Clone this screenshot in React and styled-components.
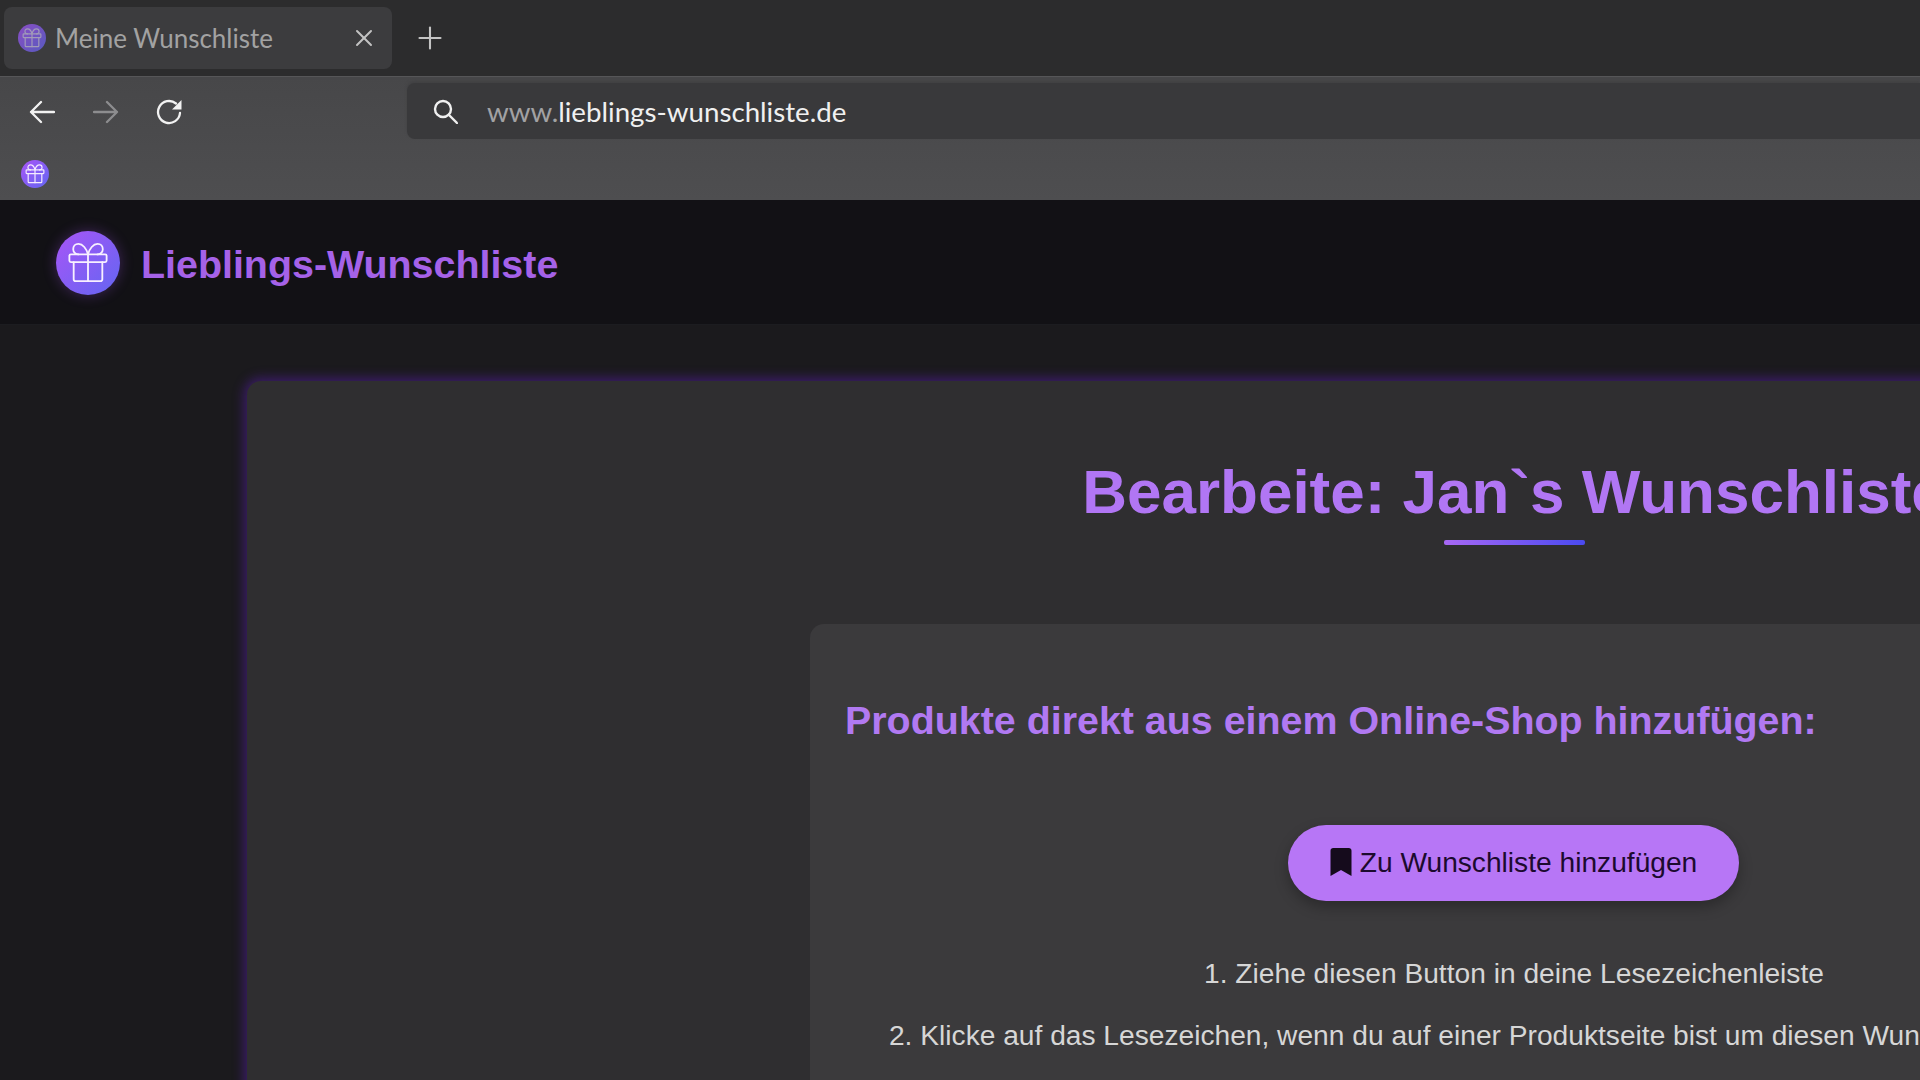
import React from "react";
import styled, { createGlobalStyle } from "styled-components";
import { Plus, X } from "lucide-react";
import { FaBookmark } from "react-icons/fa";

const Global = createGlobalStyle`
  html, body { margin: 0; padding: 0; height: 1080px; overflow: hidden; background: #1b1a1d; }
  #root { width: 1920px; height: 1080px; overflow: hidden; }
  * { box-sizing: border-box; }
`;

const GiftIcon = ({ size, stroke = 2 }) => (
  <svg width={size} height={size} viewBox="0 0 44 44" fill="none" stroke="currentColor" strokeWidth={stroke} strokeLinejoin="round" strokeLinecap="round">
    <rect x="2.5" y="13" width="39" height="8" rx="1.5" />
    <path d="M7 21v18a2 2 0 0 0 2 2h26a2 2 0 0 0 2-2V21" />
    <path d="M22 13v28" />
    <path d="M22 13c-1.500-6-5.500-11-10-11-3.500 0-5.500 2.500-5.500 5.500 0 3 2.500 5.500 5.500 5.500M22 13c1.500-6 5.500-11 10-11 3.500 0 5.500 2.500 5.500 5.500 0 3-2.500 5.500-5.500 5.500" />
  </svg>
);

const BackIcon = () => (
  <svg width="26" height="24" viewBox="0 0 26 24" fill="none" stroke="currentColor" strokeWidth="2.3" strokeLinecap="round" strokeLinejoin="round">
    <path d="M25 12H2M12 2 2 12l10 10" />
  </svg>
);
const ForwardIcon = () => (
  <svg width="26" height="24" viewBox="0 0 26 24" fill="none" stroke="currentColor" strokeWidth="2.3" strokeLinecap="round" strokeLinejoin="round">
    <path d="M1 12h23M14 2l10 10-10 10" />
  </svg>
);
const ReloadIcon = () => (
  <svg width="26" height="26" viewBox="0 0 26 26" fill="none" stroke="currentColor" strokeWidth="2.3" strokeLinecap="round">
    <path d="M24 14a11 11 0 1 1-4-9.500" />
    <path d="M25.500 1v9.500H16z" fill="currentColor" stroke="none" />
  </svg>
);
const SearchIcon = () => (
  <svg width="25" height="25" viewBox="0 0 25 25" fill="none" stroke="currentColor" strokeWidth="2.400" strokeLinecap="round">
    <circle cx="10" cy="10" r="8" />
    <path d="M16 16l8 8" />
  </svg>
);

const TabStrip = styled.div`
  height: 76px; background: #2c2c2d; display: flex; align-items: center; padding-left: 4px;
`;
const Tab = styled.div`
  width: 388px; height: 62px; background: #3c3c3e; border-radius: 8px; display: flex; align-items: center;
  padding: 0 14px 0 14px; gap: 9px; color: #a2a2a2; font: 26px Lato, "Noto Sans", sans-serif;
`;
const Favicon = styled.span`
  width: 28px; height: 28px; border-radius: 50%; flex: none; display: flex; align-items: center; justify-content: center;
  color: ${p => p.$dim ? "#c9c0e8" : "#f5ecff"};
  background: linear-gradient(135deg, #a855f7, #6366f1);
  opacity: ${p => p.$dim ? 0.72 : 1};
`;
const TabTitle = styled.span` flex: 1; `;
const NewTab = styled.span` margin-left: 20px; display: flex; color: #c4c4c4; `;
const Toolbar = styled.div`
  height: 124px; background: linear-gradient(#474749, #4e4e50); border-top: 1px solid #565658;
`;
const NavRow = styled.div`
  height: 70px; display: flex; align-items: center; padding-left: 29px;
`;
const NavButton = styled.span`
  display: flex; flex: none; margin-right: ${p => p.$gap}px; color: ${p => p.$off ? "#8d8d8f" : "#f2f2f2"};
`;
const AddressBar = styled.div`
  flex: 1; height: 56px; margin-top: -2px; margin-left: 225px; background: #39393b; border-radius: 8px 0 0 8px;
  display: flex; align-items: center; padding-left: 26px; gap: 29px;
  color: #f0f0f0; font: 27.7px Lato, "Noto Sans", sans-serif; box-shadow: 0 -2px 3px #414143;
`;
const Muted = styled.span` color: #a2a2a4; `;
const BookmarkRow = styled.div` height: 53px; padding-left: 21px; display: flex; align-items: center; `;

const Header = styled.header`
  height: 124.5px; background: #121115; border-bottom: 1px solid #1c1c20; display: flex; align-items: center;
  padding: 2px 0 0 56px; gap: 21px;
`;
const Logo = styled.div`
  width: 64px; height: 64px; border-radius: 50%; background: linear-gradient(135deg, #a855f7, #6366f1);
  display: flex; align-items: center; justify-content: center; color: #f8f0ff;
  box-shadow: 0 0 14px rgba(168, 85, 247, 0.3);
`;
const Brand = styled.div`
  margin-top: 3px; font: bold 39.4px "Liberation Sans", Arial, sans-serif; color: #a562e8;
`;
const Main = styled.main`
  width: 3028px; padding: 56px 247px 0; background: #1b1a1d; height: 756px; overflow: hidden;
`;
const Card = styled.section`
  background: #2f2e30; border-radius: 14px 14px 0 0; height: 900px; padding-top: 75px;
  box-shadow: 0 0 12px 3px rgba(100, 30, 200, 0.45);
`;
const Title = styled.h1`
  margin: 0; text-align: center; font: bold 62px/72px "Liberation Sans", Arial, sans-serif; color: #b176f4;
`;
const Underline = styled.div`
  width: 141px; height: 5px; margin: 12.5px auto 0; border-radius: 2px;
  background: linear-gradient(90deg, #a868f4, #4a4af0);
`;
const Inner = styled.div`
  width: 1408px; margin: 78.5px auto 0; background: #3b3a3c; border-radius: 14px 14px 0 0; padding: 73px 35px 0; height: 600px;
`;
const SubTitle = styled.h2`
  margin: 0; font: bold 39.4px/46px "Liberation Sans", Arial, sans-serif; color: #b179f2;
`;
const AddButton = styled.a`
  display: flex; width: 451px; height: 76px; margin: 82px 0 0 443px; border-radius: 38px; background: #b776f6;
  align-items: center; justify-content: center; gap: 5px; padding-right: 3px; color: #1c0a2e;
  font: 28.16px "Liberation Sans", Arial, sans-serif; box-shadow: 0 6px 14px rgba(0, 0, 0, 0.28);
`;
const BookmarkIcon = styled(FaBookmark)` color: #150b1c; margin-top: -1px; `;
const Steps = styled.div`
  margin-top: 55px; text-align: center; color: #d6d6d6; font: 28.16px/36px "Liberation Sans", Arial, sans-serif;
  display: flex; flex-direction: column; gap: 26px;
`;

export default function App() {
  return (
    <>
      <Global />
      <TabStrip>
        <Tab>
          <Favicon $dim><GiftIcon size={20} stroke={2.6} /></Favicon>
          <TabTitle>Meine Wunschliste</TabTitle>
          <X size={28} color="#c2c2c2" strokeWidth={1.7} />
        </Tab>
        <NewTab><Plus size={36} strokeWidth={1.4} /></NewTab>
      </TabStrip>
      <Toolbar>
        <NavRow>
          <NavButton $gap={38}><BackIcon /></NavButton>
          <NavButton $off $gap={37}><ForwardIcon /></NavButton>
          <NavButton $gap={0}><ReloadIcon /></NavButton>
          <AddressBar>
            <SearchIcon />
            <span><Muted>www.</Muted>lieblings-wunschliste.de</span>
          </AddressBar>
        </NavRow>
        <BookmarkRow><Favicon><GiftIcon size={20} stroke={2.6} /></Favicon></BookmarkRow>
      </Toolbar>
      <Header>
        <Logo><GiftIcon size={42} stroke={1.9} /></Logo>
        <Brand>Lieblings-Wunschliste</Brand>
      </Header>
      <Main>
        <Card>
          <Title>Bearbeite: Jan`s Wunschliste</Title>
          <Underline />
          <Inner>
            <SubTitle>Produkte direkt aus einem Online-Shop hinzufügen:</SubTitle>
            <AddButton><BookmarkIcon size={28} /> Zu Wunschliste hinzufügen</AddButton>
            <Steps>
              <div>1. Ziehe diesen Button in deine Lesezeichenleiste</div>
              <div>2. Klicke auf das Lesezeichen, wenn du auf einer Produktseite bist um diesen Wunsch hinzuzufügen</div>
            </Steps>
          </Inner>
        </Card>
      </Main>
    </>
  );
}
